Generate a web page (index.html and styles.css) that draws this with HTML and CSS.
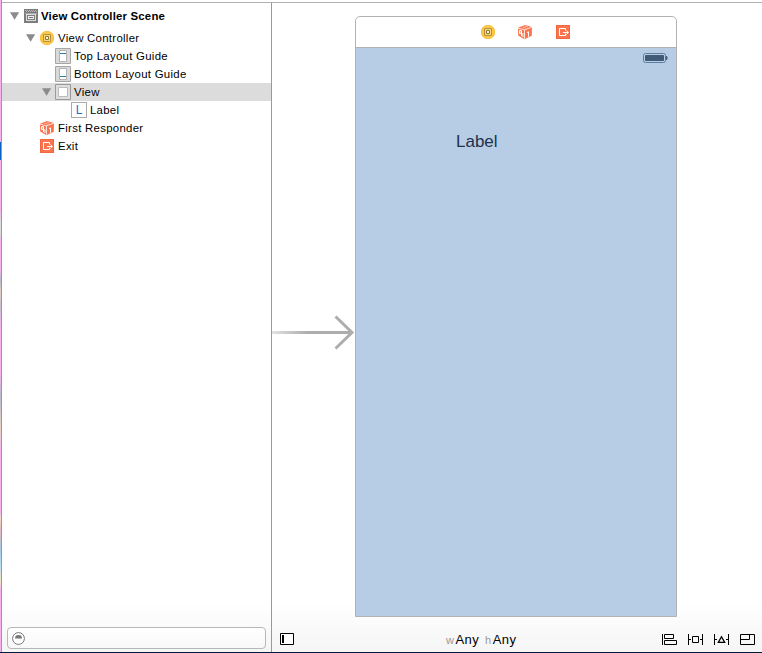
FILE: index.html
```html
<!DOCTYPE html>
<html lang="en">
<head>
<meta charset="utf-8">
<title>View Controller Scene</title>
<link rel="stylesheet" href="styles.css">
</head>
<body>
<svg class="defs" width="0" height="0">
  <defs>
    <symbol id="tri" viewBox="0 0 10 8"><path d="M0 .2h9.2L4.6 7.8z" fill="#8b8b8b"/></symbol>
    <symbol id="vc" viewBox="0 0 14 16">
      <circle cx="7" cy="8" r="7.1" fill="#fdc748"/>
      <circle cx="7" cy="8" r="6.7" fill="none" stroke="#f3bb40" stroke-width=".7"/>
      <path d="M3.5 4.5h7v7h-7z" fill="#fbd676" stroke="#b4933c"/>
      <path d="M5.5 6.5h3v3h-3z" fill="#fff3cd" stroke="#8f783d"/>
    </symbol>
    <symbol id="cube" viewBox="0 0 14 16">
      <path d="M0 3.7L7 .9l7 2-.2 8.8-7.3 3.5L.2 11.5z" fill="#fb744e"/>
      <path d="M0 4.1l6.3 1.7 7.7-2.6M6.5 5.8v9" fill="none" stroke="#fff" stroke-width=".8"/>
      <path d="M4.5 3.1l3 .8M6.8 2.2l3 .8" stroke="#ffc7b6" stroke-width=".8"/>
      <path d="M1.5 6.5h1.6v3H1.5zM3.5 6.5V12M4.9 9v4M9 8.6l1.5-.8v5" fill="none" stroke="#fff"/>
    </symbol>
    <symbol id="exit" viewBox="0 0 14 14">
      <path d="M0 0h14v14H0z" fill="#fb744e"/>
      <path d="M.5.5h13v13H.5z" fill="none" stroke="#ef6844"/>
      <path d="M9.5 5.5v-2h-6v7h6v-2M7 7.5h5M10.5 5.5l2 2-2 2" fill="none" stroke="#fff"/>
    </symbol>
  </defs>
</svg>
<div class="app">
  <div class="edge"></div>
  <aside class="outline">
    <ul class="tree">
      <li class="row scene"><svg class="tri"><use href="#tri"/></svg>
        <svg class="icon i14" viewBox="0 0 14 14" shape-rendering="crispEdges"><path d="M0 0h14v14H0z" fill="#7c7c7c"/><path d="M1 1.5h12M2 2.5h12" stroke="#b8b8b8" stroke-dasharray="1 1"/><path d="M1 4.5h12" stroke="#aaa"/><path d="M2.5 5.5h9v6h-9z" fill="none" stroke="#ddd"/><path d="M4.5 7.5h5v2h-5z" fill="#777" stroke="#eee"/></svg>
        <span>View Controller Scene</span></li>
      <li class="row controller"><svg class="tri"><use href="#tri"/></svg><svg class="icon round"><use href="#vc"/></svg><span>View Controller</span></li>
      <li class="row child"><svg class="icon i16" viewBox="0 0 16 16"><path d="M.5.5h15v15H.5z" fill="#d9d9d9" stroke="#a6a6a6"/><path d="M4.5 2.5h7v11h-7z" fill="#fff" stroke="#b3b3b3"/><path d="M5 5.5h6" stroke="#267fa6"/></svg><span>Top Layout Guide</span></li>
      <li class="row child"><svg class="icon i16" viewBox="0 0 16 16"><path d="M.5.5h15v15H.5z" fill="#d9d9d9" stroke="#a6a6a6"/><path d="M4.5 2.5h7v11h-7z" fill="#fff" stroke="#b3b3b3"/><path d="M5 10.5h6" stroke="#267fa6"/></svg><span>Bottom Layout Guide</span></li>
      <li class="row view selected"><svg class="tri"><use href="#tri"/></svg><svg class="icon i16" viewBox="0 0 16 16"><path d="M.5.5h15v15H.5z" fill="#dedede" stroke="#999"/><path d="M3.5 3.5h9v9h-9z" fill="#fff" stroke="#bbb"/></svg><span>View</span></li>
      <li class="row label"><span class="letter">L</span><span>Label</span></li>
      <li class="row object"><svg class="icon round"><use href="#cube"/></svg><span>First Responder</span></li>
      <li class="row object"><svg class="icon i14"><use href="#exit"/></svg><span>Exit</span></li>
    </ul>
    <div class="filter"><svg width="13" height="13" viewBox="0 0 13 13"><circle cx="6.5" cy="6.5" r="5.9" fill="#fff" stroke="#777"/><path d="M3 6.5a3.5 3.4 0 0 1 7 0z" fill="#777"/></svg></div>
  </aside>
  <main class="canvas">
    <div class="stage">
      <svg class="arrow" width="83" height="36" viewBox="0 0 83 36"><defs><linearGradient id="fade"><stop stop-color="#e2e2e2"/><stop offset=".45" stop-color="#adadad"/></linearGradient></defs><path d="M0 16h80v3H0z" fill="url(#fade)"/><path d="M63.5 1.5l16.5 16-16.5 16" fill="none" stroke="#adadad" stroke-width="3"/></svg>
      <section class="device">
        <header class="dock"><svg class="round"><use href="#vc"/></svg><svg class="round"><use href="#cube"/></svg><svg class="i14"><use href="#exit"/></svg></header>
        <div class="screen">
          <svg class="battery" width="25" height="10" viewBox="0 0 25 10"><rect x=".5" y=".5" width="22" height="9" rx="2" fill="none" stroke="#607d9b"/><rect x="2" y="2" width="19" height="6" rx=".8" fill="#405b77"/><path d="M23.5 3q1.5 2 0 4z" fill="#405b77" stroke="#405b77" stroke-width=".8"/></svg>
          <span class="text">Label</span>
        </div>
      </section>
    </div>
    <footer class="bar">
      <svg width="14" height="12" viewBox="0 0 14 12"><path d="M.5.5h13v11H.5z" fill="#fff" stroke="#000"/><path d="M2 2h2v8H2z"/></svg>
      <div class="size"><i>w</i><b>Any</b><i class="h">h</i><b>Any</b></div>
      <div class="tools">
        <svg width="15" height="12" viewBox="0 0 15 12"><path d="M.5 1v11M2.5 1.5h9v4h-9zM2.5 7.5h12v4h-12z"/></svg>
        <svg width="15" height="12" viewBox="0 0 15 12"><path d="M.5 1v11M14.5 1v11M1 6.5h2M12 6.5h2M4.5 3.5h6v6h-6z"/></svg>
        <svg width="15" height="12" viewBox="0 0 15 12"><path d="M.5 1v11M14.5 1v11M1 6.5h2M12 6.5h2"/><path d="M4.3 9.4h6.4L7.5 3.8z" stroke-width="1.3"/></svg>
        <svg width="15" height="12" viewBox="0 0 15 12"><path d="M.5 1.5h14v10H.5zM1 6.5h8.5V2"/></svg>
      </div>
    </footer>
  </main>
</div>
</body>
</html>
```
FILE: styles.css
```css
* { box-sizing: border-box; }
body { margin: 0; width: 762px; height: 653px; overflow: hidden; background: #fff; font-family: "Liberation Sans", Arial, sans-serif; color: #000; }
svg { display: block; flex: none; }
.defs { position: absolute; }
.app { display: flex; height: 653px; border-bottom: 1px solid #07193b; }
.edge { width: 2px; border-right: 1px solid #999; background: linear-gradient(#f3b3f0 142px, #0b60c4 142px, #0b60c4 160px, #f3b3f0 160px, #f3b3f0 210px, #ddd 222px, #ddd 234px, #f3b3f0 240px, #f3b3f0 270px, #b9b9cc 280px, #e4cfc4 292px, #c6c2cf 306px, #f3b3f0 325px, #f3b3f0 375px, #b9b9cc 396px, #ecd5c6 430px, #f3b3f0 450px, #f3b3f0 512px, #f7ddc7 518px, #e7b8bd 530px, #a7c8e8 550px, #b5dff5 565px, #f7e3c7 582px, #f3b3f0 590px); }
.outline, .canvas { margin-top: 2px; border-top: 1px solid #b2b2b2; height: 650px; display: flex; flex-direction: column; background: linear-gradient(#fff 600px, #f5f5f5); }
.outline { width: 270px; border-right: 1px solid #999; }
.tree { list-style: none; margin: 0; padding: 4px 0 0; flex: 1; }
.row { display: flex; align-items: center; height: 18px; font-size: 11.4px; letter-spacing: .29px; white-space: nowrap; }
.tri { width: 10px; height: 8px; }
.i14 { width: 14px; height: 14px; }
.i16 { width: 16px; height: 16px; }
.round { width: 14px; height: 16px; }
.row .icon { margin-right: 3px; }
.scene { padding-left: 8px; margin-bottom: 4px; font-weight: bold; letter-spacing: .19px; }
.scene .icon { margin-left: 4px; }
.controller { padding-left: 24px; }
.controller .icon { margin-left: 4px; }
.child { padding-left: 53px; }
.view { padding-left: 40px; }
.view .icon { margin-left: 3px; }
.selected { background: #dcdcdc; }
.label { padding-left: 69px; }
.letter { width: 16px; height: 16px; margin-right: 3px; border: 1px solid #aaa; background: #fff; color: #1f6fc8; font-size: 12px; line-height: 14px; text-align: center; letter-spacing: 0; }
.object { padding-left: 38px; }
.controller .icon, .object .icon { margin-right: 4px; }
.filter { margin: 0 5px 3px; height: 22px; border: 1px solid #b5b9b5; border-radius: 4px; padding: 4px; background: linear-gradient(#fff, #f8f8f8); }
.canvas { width: 490px; }
.stage { flex: 1; display: flex; padding-top: 13px; }
.arrow { margin-top: 299px; }
.device { width: 322px; height: 601px; border: 1px solid #b2b2b2; border-radius: 5px 5px 0 0; background: #fff; display: flex; flex-direction: column; }
.dock { height: 31px; border-bottom: 1px solid #b2b2b2; display: flex; align-items: center; padding-left: 125px; }
.dock svg + svg { margin-left: 23px; }
.dock svg:last-child { margin-left: 24px; }
.screen { flex: 1; background: #b7cde5; display: flex; flex-direction: column; align-items: flex-start; }
.battery { margin: 5px 8px 0 0; align-self: flex-end; }
.text { margin: 69px 0 0 100px; font-size: 17px; line-height: 20px; color: #20324c; }
.bar { height: 26px; display: flex; align-items: center; padding: 0 7px 0 8px; }
.size { display: flex; align-items: baseline; margin-left: 152px; font-size: 13px; }
.size b { font-weight: normal; letter-spacing: .4px; }
.size i { font-style: normal; font-size: 11px; color: #999; margin-right: 1.5px; }
.size .h { margin-left: 6px; }
.tools { display: flex; gap: 11px; margin-left: auto; }
.tools svg { fill: none; stroke: #000; }
```
